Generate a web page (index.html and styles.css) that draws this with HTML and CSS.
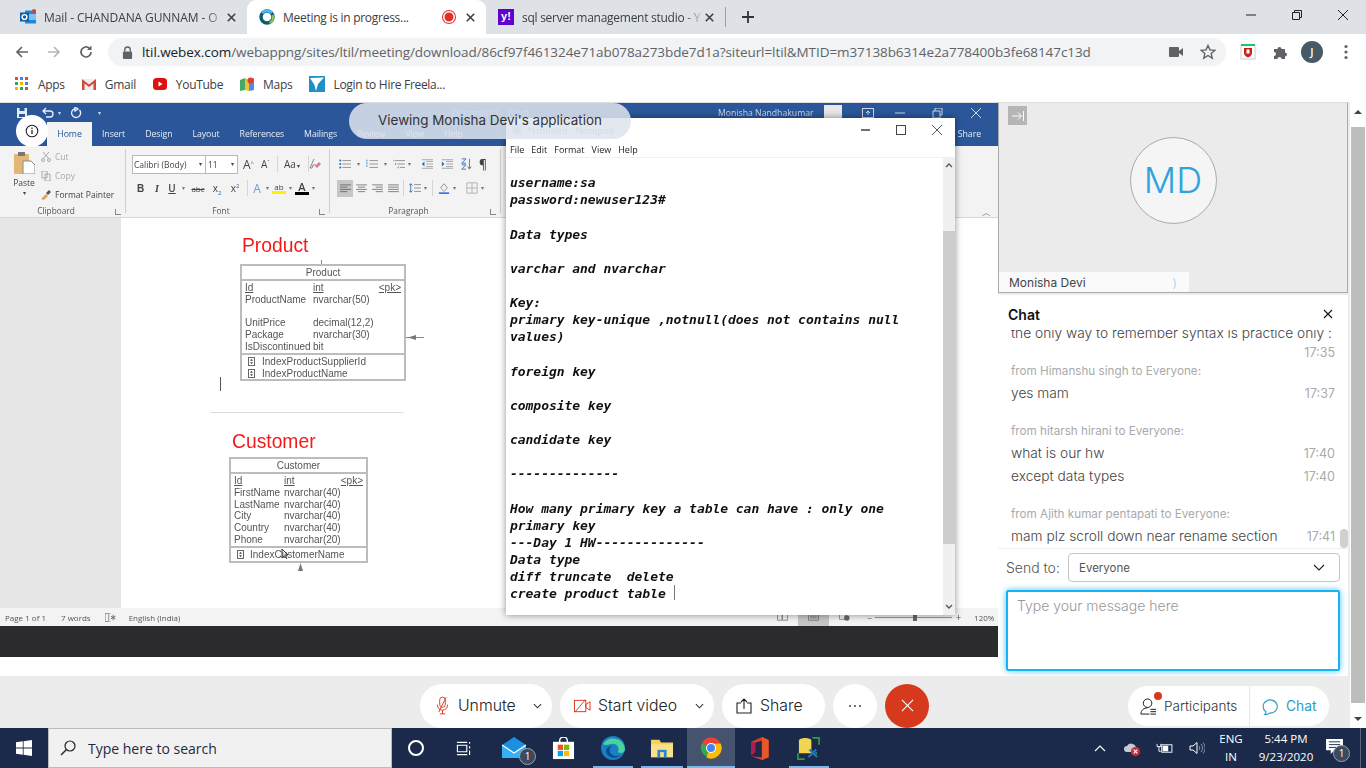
FILE: index.html
```html
<!DOCTYPE html>
<html lang="en">
<head>
<meta charset="utf-8">
<title>Meeting is in progress...</title>
<link rel="stylesheet" href="styles.css">
</head>
<body>
<header class="tabstrip">
  <div class="tab tab-first">
    <svg class="favicon" viewBox="0 0 16 16"><rect x="5" y="1.500" width="11" height="13" fill="#1e88d9"/><rect x="9" y="5" width="7" height="6" fill="#7cc3f2"/><rect x="0" y="3.500" width="9" height="9" fill="#0f5fa8"/><circle cx="4.500" cy="8" r="2.400" fill="none" stroke="#fff" stroke-width="1.400"/><circle cx="14" cy="2" r="2" fill="#d8413a"/></svg>
    <span class="tab-title fade">Mail - CHANDANA GUNNAM - O</span>
    <svg class="tab-x" viewBox="0 0 9 9"><path d="M.8.800l7.400 7.400M8.200.800L.8 8.200" stroke="#3c4043" stroke-width="1.600"/></svg>
  </div>
  <div class="tab tab-active">
    <svg class="favicon" viewBox="0 0 16 16"><circle cx="8" cy="8" r="6" fill="none" stroke="#0b5a6e" stroke-width="3.400"/><path d="M3 4a6.500 6.500 0 0 1 10 0" fill="none" stroke="#49b9e6" stroke-width="3"/><path d="M13.500 6a6 6 0 0 1-3 8" fill="none" stroke="#8ac64a" stroke-width="2.400"/></svg>
    <span class="tab-title">Meeting is in progress...</span>
    <span class="rec"></span>
    <svg class="tab-x" viewBox="0 0 9 9"><path d="M.8.800l7.400 7.400M8.200.800L.8 8.200" stroke="#3c4043" stroke-width="1.600"/></svg>
  </div>
  <div class="tab tab-last">
    <span class="yahoo">y!</span>
    <span class="tab-title fade">sql server management studio - Y</span>
    <svg class="tab-x" viewBox="0 0 9 9"><path d="M.8.800l7.400 7.400M8.200.800L.8 8.200" stroke="#3c4043" stroke-width="1.600"/></svg>
  </div>
  <span class="tab-sep"></span>
  <svg class="plus" viewBox="0 0 14 14"><path d="M7 1v12M1 7h12" stroke="#333" stroke-width="1.800"/></svg>
  <div class="winctl">
    <svg viewBox="0 0 12 12"><path d="M1 6h10" stroke="#222" stroke-width="1"/></svg>
    <svg viewBox="0 0 12 12"><path d="M1.500 3.500h7v7h-7zM3.500 3.500v-2h7v7h-2" fill="none" stroke="#222"/></svg>
    <svg viewBox="0 0 12 12"><path d="M1 1l10 10M11 1L1 11" stroke="#222"/></svg>
  </div>
</header>

<nav class="toolbar">
  <svg class="nav-ic" viewBox="0 0 16 16"><path d="M14 8H3M8 3L3 8l5 5" fill="none" stroke="#5f6368" stroke-width="1.700"/></svg>
  <svg class="nav-ic" viewBox="0 0 16 16"><path d="M2 8h11M8 3l5 5-5 5" fill="none" stroke="#b4b6b9" stroke-width="1.700"/></svg>
  <svg class="nav-ic" viewBox="0 0 16 16"><path d="M13 8a5 5 0 1 1-1.500-3.600" fill="none" stroke="#5f6368" stroke-width="1.700"/><path d="M13.500 1.500v4.500h-4.500z" fill="#5f6368"/></svg>
  <div class="omnibox">
    <svg class="lock" viewBox="0 0 12 14"><path d="M3 6V4a3 3 0 0 1 6 0v2" fill="none" stroke="#5f6368" stroke-width="1.500"/><rect x="1" y="6" width="10" height="8" rx="1" fill="#5f6368"/></svg>
    <span class="url"><b>ltil.webex.com</b>/webappng/sites/ltil/meeting/download/86cf97f461324e71ab078a273bde7d1a?siteurl=ltil&amp;MTID=m37138b6314e2a778400b3fe68147c13d</span>
    <svg class="cam" viewBox="0 0 14 10"><rect width="10" height="10" rx="1" fill="#5f6368"/><path d="M10 4l4-3v8l-4-3z" fill="#5f6368"/></svg>
    <svg class="star" viewBox="0 0 16 16"><path d="M8 1.500l2 4.400 4.800.5-3.600 3.200 1 4.700L8 11.500l-4.200 2.800 1-4.700L1.200 6.400 6 5.900z" fill="none" stroke="#5f6368" stroke-width="1.400"/></svg>
  </div>
  <svg class="ext" viewBox="0 0 16 16"><rect x="1" y="1" width="14" height="14" fill="#fff" stroke="#ccc"/><rect x="1" y="0" width="14" height="2" fill="#21c16b"/><path d="M4 4h8v5c0 2-2 3.500-4 4.500C6 12.500 4 11 4 9z" fill="#c9201c"/><rect x="6.500" y="5.500" width="3" height="4" fill="#fff"/></svg>
  <svg class="ext puzzle" viewBox="0 0 16 16"><path d="M2 5h3.500a2 2 0 1 1 4 0H13v3.500a2 2 0 1 1 0 4V15H9.500a2 2 0 1 0-4 0H2v-3a2 2 0 1 0 0-4z" fill="#5f6368"/></svg>
  <span class="avatar">J</span>
  <svg class="dots" viewBox="0 0 4 16"><circle cx="2" cy="2.500" r="1.600" fill="#5f6368"/><circle cx="2" cy="8" r="1.600" fill="#5f6368"/><circle cx="2" cy="13.500" r="1.600" fill="#5f6368"/></svg>
</nav>

<nav class="bookmarks">
  <a class="bm"><svg viewBox="0 0 14 14"><g><rect x="0" y="0" width="3" height="3" fill="#e2483c"/><rect x="5" y="0" width="3" height="3" fill="#3d84f0"/><rect x="10" y="0" width="3" height="3" fill="#e2483c"/><rect x="0" y="5" width="3" height="3" fill="#31a653"/><rect x="5" y="5" width="3" height="3" fill="#f4b400"/><rect x="10" y="5" width="3" height="3" fill="#3d84f0"/><rect x="0" y="10" width="3" height="3" fill="#f4b400"/><rect x="5" y="10" width="3" height="3" fill="#31a653"/><rect x="10" y="10" width="3" height="3" fill="#e2483c"/></g></svg>Apps</a>
  <a class="bm"><svg viewBox="0 0 14 14"><path d="M0 2h14v11h-14z" fill="#eee"/><path d="M0 2l7 5.500L14 2v11h-2.500V6.500L7 10 2.500 6.500V13H0z" fill="#d2483a"/></svg>Gmail</a>
  <a class="bm"><svg viewBox="0 0 14 14"><rect y="1" width="14" height="12" rx="3.500" fill="#e01010"/><path d="M5.500 4.500l4 2.500-4 2.500z" fill="#fff"/></svg>YouTube</a>
  <a class="bm"><svg viewBox="0 0 14 14"><path d="M0 3l5-2v12l-5 1z" fill="#48a868"/><path d="M5 1l4 2v11l-4-1z" fill="#f1c232"/><path d="M9 3l5-2v12l-5 1z" fill="#4a8ce8"/><circle cx="10.500" cy="3.500" r="3" fill="#d8402f"/></svg>Maps</a>
  <a class="bm bm-wide"><svg viewBox="0 0 16 16"><rect width="16" height="16" fill="#1f8fc9"/><path d="M1 2l14-.5L9 8l-2 7-1.500-6z" fill="#fff"/></svg>Login to Hire Freela...</a>
</nav>

<main class="main">
  <div class="content">
    <div class="top">
      <div class="stage">
        <section class="share">
          <div class="word">
            <div class="wtitle">
              <svg class="qat" viewBox="0 0 12 12"><path d="M1 1h10v10H1z" fill="#e4ebf5"/><rect x="3.500" y="1" width="5" height="3" fill="#2b579a"/><rect x="3" y="7" width="6" height="3" fill="#2b579a"/></svg>
              <svg class="qat" viewBox="0 0 12 12"><path d="M4 1L1 4l3 3M1.500 4H8a3 3 0 0 1 0 6H4" fill="none" stroke="#eef" stroke-width="1.300"/></svg>
              <span class="wcaret">▾</span>
              <svg class="qat" viewBox="0 0 12 12"><path d="M9.500 3A4.500 4.500 0 1 1 5 1.600M5 0v4l3-2z" fill="none" stroke="#eef" stroke-width="1.300"/></svg>
              <span class="wcaret wcaret-gap">▾</span>
              <span class="doc-name">Document1 - Word</span>
              <span class="user-name">Monisha Nandhakumar</span>
              <span class="user-pic"></span>
              <svg class="wbtn" viewBox="0 0 12 10"><rect x=".5" y=".5" width="11" height="9" fill="none" stroke="#cdd7e8"/><path d="M6 7V3M4 5l2-2 2 2" fill="none" stroke="#cdd7e8"/></svg>
              <svg class="wbtn" viewBox="0 0 12 10"><path d="M1 5h10" stroke="#cdd7e8"/></svg>
              <svg class="wbtn" viewBox="0 0 12 10"><path d="M1 3h7v7H1zM3 3V0h7v7H8" fill="none" stroke="#cdd7e8"/></svg>
              <svg class="wbtn" viewBox="0 0 12 10"><path d="M1 0l10 10M11 0L1 10" stroke="#cdd7e8"/></svg>
            </div>
            <div class="wtabs">
              <span class="wtab on">Home</span><span class="wtab">Insert</span><span class="wtab">Design</span><span class="wtab">Layout</span><span class="wtab">References</span><span class="wtab">Mailings</span><span class="wtab">Review</span><span class="wtab">View</span><span class="wtab">Help</span>
              <span class="wshare">Share</span>
            </div>
            <div class="ribbon">
              <div class="rgroup g-clip">
                <div class="clip-body">
                  <div class="paste">
                    <svg viewBox="0 0 22 22"><rect x="1" y="2" width="15" height="20" rx="1" fill="#e3b777"/><rect x="5" y="0" width="7" height="4" fill="#777"/><path d="M10 9h8l4 4v9H10z" fill="#fff" stroke="#888"/></svg>
                    <span>Paste</span><i>▾</i>
                  </div>
                  <div class="clip-list">
                    <span class="dim"><svg viewBox="0 0 10 10"><path d="M2 0l6 7M8 0L2 7" stroke="#aaa"/><circle cx="2" cy="8" r="1.500" fill="none" stroke="#aaa"/><circle cx="8" cy="8" r="1.500" fill="none" stroke="#aaa"/></svg>Cut</span>
                    <span class="dim"><svg viewBox="0 0 10 10"><path d="M1 0h5v7H1zM4 3h5v7H4z" fill="#f3f3f3" stroke="#aaa"/></svg>Copy</span>
                    <span><svg viewBox="0 0 10 10"><path d="M0 9l5-5 2 2-4 4z" fill="#d9a557"/><path d="M5 3l3-3 2 2-3 3z" fill="#555"/></svg>Format Painter</span>
                  </div>
                </div>
                <div class="rlabel">Clipboard<em></em></div>
              </div>
              <div class="rgroup g-font">
                <div class="rrow r1">
                  <span class="combo c-font">Calibri (Body)<i>▾</i></span><span class="combo c-size">11<i>▾</i></span>
                  <span class="gl big">A<sup>^</sup></span><span class="gl mid">A<sup>ˇ</sup></span><span class="vsep"></span><span class="gl aa">Aa<i>▾</i></span><span class="vsep"></span>
                  <svg class="ri ri-clear" viewBox="0 0 12 12"><path d="M5 1L1 10h2l1-3h3" fill="none" stroke="#888"/><path d="M6 8l4-4 2 2-4 4z" fill="#e07a8b"/></svg>
                </div>
                <div class="rrow r2">
                  <span class="gl b">B</span><span class="gl it">I</span><span class="gl un">U</span><i class="car">▾</i><span class="gl abc">abc</span><span class="gl xs">x<sub>2</sub></span><span class="gl xs">x<sup>2</sup></span><span class="vsep"></span>
                  <span class="gl glow">A</span><i class="car">▾</i><span class="gl hl">ab</span><i class="car">▾</i><span class="gl fc">A</span><i class="car">▾</i>
                </div>
                <div class="rlabel">Font<em></em></div>
              </div>
              <div class="rgroup g-para">
                <div class="rrow p1">
                  <svg class="ri" viewBox="0 0 14 12"><path d="M4 2h10M4 6h10M4 10h10" stroke="#888"/><circle cx="1.500" cy="2" r="1.200" fill="#2b6cb0"/><circle cx="1.500" cy="6" r="1.200" fill="#2b6cb0"/><circle cx="1.500" cy="10" r="1.200" fill="#2b6cb0"/></svg><i class="car">▾</i>
                  <svg class="ri" viewBox="0 0 14 12"><path d="M4 2h10M4 6h10M4 10h10" stroke="#888"/><path d="M1 1v9" stroke="#2b6cb0" stroke-dasharray="2 1"/></svg><i class="car">▾</i>
                  <svg class="ri" viewBox="0 0 14 12"><path d="M2 2h12M5 6h9M8 10h6" stroke="#888"/><path d="M0 1v2M3 5v2M6 9v2" stroke="#2b6cb0"/></svg><i class="car car-s">▾</i>
                  <span class="vsep"></span>
                  <svg class="ri" viewBox="0 0 14 12"><path d="M6 3h8M6 6h8M6 9h8M1 1h13M1 11h13" stroke="#888" stroke-width=".8"/><path d="M4 3L1 6l3 3z" fill="#2b6cb0"/></svg>
                  <svg class="ri" viewBox="0 0 14 12"><path d="M6 3h8M6 6h8M6 9h8M1 1h13M1 11h13" stroke="#888" stroke-width=".8"/><path d="M1 3l3 3-3 3z" fill="#2b6cb0"/></svg>
                  <span class="vsep"></span>
                  <svg class="ri" viewBox="0 0 14 14"><path d="M2 1h5L2 6h5M2 8h5L2 13h5" fill="none" stroke="#2b6cb0"/><path d="M11 1v11M9 10l2 3 2-3" fill="none" stroke="#666"/></svg>
                  <span class="vsep"></span>
                  <span class="gl pilcrow">¶</span>
                </div>
                <div class="rrow p2">
                  <span class="al on"><svg viewBox="0 0 12 10"><path d="M0 1h12M0 3.500h8M0 6h12M0 8.500h8" stroke="#666"/></svg></span>
                  <span class="al"><svg viewBox="0 0 12 10"><path d="M0 1h12M2 3.500h8M0 6h12M2 8.500h8" stroke="#777"/></svg></span>
                  <span class="al"><svg viewBox="0 0 12 10"><path d="M0 1h12M4 3.500h8M0 6h12M4 8.500h8" stroke="#777"/></svg></span>
                  <span class="al"><svg viewBox="0 0 12 10"><path d="M0 1h12M0 3.500h12M0 6h12M0 8.500h12" stroke="#777"/></svg></span>
                  <span class="vsep"></span>
                  <svg class="ri" viewBox="0 0 14 12"><path d="M2 1v10M0 3l2-2 2 2M0 9l2 2 2-2" fill="none" stroke="#2b6cb0"/><path d="M6 2h8M6 6h8M6 10h8" stroke="#888"/></svg><i class="car">▾</i>
                  <span class="vsep"></span>
                  <svg class="ri" viewBox="0 0 14 14"><path d="M3 7l4-5 4 5-4 4z" fill="none" stroke="#888"/><rect x="1" y="12" width="12" height="2" fill="#3b78e7"/></svg><i class="car">▾</i>
                  <svg class="ri ri-borders" viewBox="0 0 14 14"><path d="M1 1h12v12H1zM7 1v12M1 7h12" fill="none" stroke="#aaa"/></svg><i class="car">▾</i>
                </div>
                <div class="rlabel">Paragraph<em></em></div>
              </div>
              <span class="ribbon-up">︿</span>
            </div>
            <div class="docarea">
              <div class="page">
                <h2 class="tname t-product">Product</h2>
                <div class="erd erd-product">
                  <span class="link-t"></span>
                  <div class="erd-head">Product</div>
                  <div class="erd-body">
                    <span class="u">Id</span><span class="u">int</span><span class="u">&lt;pk&gt;</span>
                    <span>ProductName</span><span>nvarchar(50)</span><span></span>
                    <span>&nbsp;</span><span></span><span></span>
                    <span>UnitPrice</span><span>decimal(12,2)</span><span></span>
                    <span>Package</span><span>nvarchar(30)</span><span></span>
                    <span>IsDiscontinued</span><span>bit</span><span></span>
                  </div>
                  <div class="erd-idx">
                    <span><i class="key"></i>IndexProductSupplierId</span>
                    <span><i class="key"></i>IndexProductName</span>
                  </div>
                  <svg class="link-r" viewBox="0 0 18 5"><path d="M0 2.500h18" stroke="#888"/><path d="M2 2.500L10 0v5z" fill="#777"/></svg>
                </div>
                <span class="text-caret"></span>
                <hr class="pg-rule">
                <h2 class="tname t-customer">Customer</h2>
                <div class="erd erd-customer">
                  <div class="erd-head">Customer</div>
                  <div class="erd-body">
                    <span class="u">Id</span><span class="u">int</span><span class="u">&lt;pk&gt;</span>
                    <span>FirstName</span><span>nvarchar(40)</span><span></span>
                    <span>LastName</span><span>nvarchar(40)</span><span></span>
                    <span>City</span><span>nvarchar(40)</span><span></span>
                    <span>Country</span><span>nvarchar(40)</span><span></span>
                    <span>Phone</span><span>nvarchar(20)</span><span></span>
                  </div>
                  <div class="erd-idx"><span><i class="key"></i>IndexCustomerName</span></div>
                  <svg class="link-b" viewBox="0 0 7 9"><path d="M3.500 0L6 8H1z" fill="#777"/></svg>
                  <svg class="mouse" viewBox="0 0 8 12"><path d="M1 1v9l2.500-2.200L6 11" fill="none" stroke="#333"/><path d="M1 1l6 6H3.500" fill="none" stroke="#333"/></svg>
                </div>
              </div>
            </div>
            <div class="wstatus">
              <span>Page 1 of 1</span><span>7 words</span>
              <svg viewBox="0 0 12 10"><path d="M0 .5h4v9H0zM6 .5h-1M6 9.500h-1" fill="none" stroke="#888"/><path d="M9 2v6M6.500 3.500l5 3M11.500 3.500l-5 3" stroke="#666"/></svg>
              <span>English (India)</span>
              <div class="wview">
                <svg viewBox="0 0 12 8"><path d="M.5.500h5v7h-5zM6 .500h5.500v7H6z" fill="none" stroke="#888"/></svg>
                <span class="wprint"><svg viewBox="0 0 12 8"><path d="M.5.500h11v7h-11zM2 3h8M2 5h8" fill="none" stroke="#777"/></svg></span>
                <svg viewBox="0 0 12 8"><path d="M.5.500h7v6h-7z" fill="none" stroke="#888"/><circle cx="8.500" cy="5" r="3" fill="#666"/></svg>
                <span class="zoom-m">−</span>
                <span class="slider"><i></i></span>
                <span class="zoom-p">+</span>
                <span class="zoom-v">120%</span>
              </div>
            </div>
          </div>

          <article class="notepad">
            <div class="np-title">
              <svg class="np-ico" viewBox="0 0 12 12"><rect x="1" y="1" width="10" height="10" fill="#cfe3ee"/><path d="M3 4h6M3 6h6M3 8h6" stroke="#9db7c6"/></svg>
              <span class="np-name">*Untitled - Notepad</span>
              <svg viewBox="0 0 12 12"><path d="M2 6h9" stroke="#111" stroke-width="1.200"/></svg>
              <svg viewBox="0 0 12 12"><rect x="1.500" y="1.500" width="9" height="9" fill="none" stroke="#444"/></svg>
              <svg viewBox="0 0 12 12"><path d="M1 1l10 10M11 1L1 11" stroke="#555"/></svg>
            </div>
            <div class="np-menu"><span>File</span><span>Edit</span><span>Format</span><span>View</span><span>Help</span></div>
            <div class="np-body">
<pre class="np-text">
username:sa
password:newuser123#

Data types

varchar and nvarchar

Key:
primary key-unique ,notnull(does not contains null
values)

foreign key

composite key

candidate key

--------------

How many primary key a table can have : only one
primary key
---Day 1 HW--------------
Data type
diff truncate  delete
create product table <span class="np-caret"></span></pre>
              <div class="np-scroll">
                <svg class="np-up" viewBox="0 0 8 5"><path d="M1 4l3-3 3 3" fill="none" stroke="#555" stroke-width="1.300"/></svg>
                <i></i>
                <svg class="np-down" viewBox="0 0 8 5"><path d="M1 1l3 3 3-3" fill="none" stroke="#555" stroke-width="1.300"/></svg>
              </div>
            </div>
          </article>

          <div class="pill">Viewing Monisha Devi's application</div>
          <div class="info"><svg viewBox="0 0 14 14"><circle cx="7" cy="7" r="5.800" fill="none" stroke="#222" stroke-width="1.100"/><path d="M7 6v4" stroke="#222" stroke-width="1.300"/><circle cx="7" cy="4.200" r=".8" fill="#222"/></svg></div>
        </section>
        <div class="dark-band"></div>
        <div class="white-band"></div>
      </div>

      <aside class="side">
        <div class="video">
          <span class="collapse"><svg viewBox="0 0 12 10"><path d="M0 5h9M6 1.500L9.500 5 6 8.500M11.500 0v10" fill="none" stroke="#fff"/></svg></span>
          <div class="md">MD</div>
          <div class="vname"><span>Monisha Devi</span><i>)</i></div>
        </div>
        <div class="chat">
          <div class="chat-head"><strong>Chat</strong><svg viewBox="0 0 10 10"><path d="M1 1l8 8M9 1L1 9" stroke="#111" stroke-width="1.100"/></svg></div>
          <div class="msgs">
            <div class="msg-group first">
              <div class="row wrap"><span>the only way to remember syntax is practice only :</span></div>
              <div class="row timeonly"><time>17:35</time></div>
            </div>
            <div class="msg-group">
              <div class="meta">from Himanshu singh to Everyone:</div>
              <div class="row"><span>yes mam</span><time>17:37</time></div>
            </div>
            <div class="msg-group">
              <div class="meta">from hitarsh hirani to Everyone:</div>
              <div class="row"><span>what is our hw</span><time>17:40</time></div>
              <div class="row"><span>except data types</span><time>17:40</time></div>
            </div>
            <div class="msg-group">
              <div class="meta">from Ajith kumar pentapati to Everyone:</div>
              <div class="row"><span>mam plz scroll down near rename section</span><time>17:41</time></div>
            </div>
            <i class="msgs-thumb"></i>
          </div>
          <div class="sendrow">
            <label>Send to:</label>
            <div class="select"><span>Everyone</span><svg viewBox="0 0 12 7"><path d="M1 1l5 5 5-5" fill="none" stroke="#222" stroke-width="1.100"/></svg></div>
          </div>
          <div class="compose">Type your message here</div>
        </div>
      </aside>
    </div>

    <div class="controls">
      <div class="pillbtn p-unmute">
        <svg viewBox="0 0 14 20"><rect x="4" y="1" width="6" height="11" rx="3" fill="none" stroke="#d6391c"/><path d="M1.500 9c0 4 2.500 6 5.500 6s5.500-2 5.500-6M7 15v4M4 19h6M11 1L3 17" fill="none" stroke="#d6391c"/></svg>
        <span>Unmute</span>
        <svg class="chev" viewBox="0 0 10 6"><path d="M1 1l4 4 4-4" fill="none" stroke="#333" stroke-width="1.200"/></svg>
      </div>
      <div class="pillbtn p-video">
        <svg viewBox="0 0 18 14"><rect x=".5" y="1" width="12" height="12" fill="none" stroke="#d6391c"/><path d="M12.500 5.500l4.500-3v9l-4.500-3zM12 .500L1 13.500" fill="none" stroke="#d6391c"/></svg>
        <span>Start video</span>
        <svg class="chev" viewBox="0 0 10 6"><path d="M1 1l4 4 4-4" fill="none" stroke="#333" stroke-width="1.200"/></svg>
      </div>
      <div class="pillbtn p-share">
        <svg viewBox="0 0 16 16"><path d="M5 5H1v10h14V5h-4M8 11V1M5 4l3-3 3 3" fill="none" stroke="#222" stroke-width="1.100"/></svg>
        <span>Share</span>
      </div>
      <div class="pillbtn p-more"><svg viewBox="0 0 14 2"><circle cx="2" cy="1" r=".9" fill="#333"/><circle cx="7" cy="1" r=".9" fill="#333"/><circle cx="12" cy="1" r=".9" fill="#333"/></svg></div>
      <div class="pillbtn p-end"><svg viewBox="0 0 14 14"><path d="M1 1l12 12M13 1L1 13" stroke="#fff" stroke-width="1.200"/></svg></div>
      <div class="dock">
        <div class="dock-part">
          <svg viewBox="0 0 18 18"><circle cx="8" cy="5.500" r="4.500" fill="none" stroke="#111"/><path d="M1 17c0-4 3-6.500 7-6.500M11 12h6M11 14.500h6M11 17h6M1 17h9" fill="none" stroke="#111"/></svg>
          <i class="dot"></i>
          <span>Participants</span>
        </div>
        <div class="dock-chat">
          <svg viewBox="0 0 18 18"><path d="M4 14.500A7.500 7 0 1 1 8 16c-1 .8-3 1.500-5 1.500 1-.8 1.300-2 1-3z" fill="none" stroke="#2e9bc5" stroke-width="1.200"/></svg>
          <span>Chat</span>
        </div>
      </div>
    </div>
  </div>
  <div class="pagebar">
    <span class="pb-up"></span>
    <i></i>
    <span class="pb-down"></span>
  </div>
</main>

<footer class="taskbar">
  <div class="start"><svg viewBox="0 0 16 16"><path d="M0 2.300l6.800-1v6.300H0zM7.600 1.200L16 0v7.600H7.600zM0 8.400h6.800v6.300l-6.800-1zM7.600 8.400H16V16l-8.400-1.200z" fill="#fff"/></svg></div>
  <div class="search">
    <svg viewBox="0 0 16 16"><circle cx="10" cy="6" r="5" fill="none" stroke="#222" stroke-width="1.200"/><path d="M6.500 9.500L1 15" stroke="#222" stroke-width="1.400"/></svg>
    <span>Type here to search</span>
  </div>
  <div class="slot s-cortana"><i class="cortana"></i></div>
  <div class="slot s-view"><svg class="tv" viewBox="0 0 16 16"><path d="M1.500 4.500h10v7h-10zM1 1.500h11M1 14.500h11M14.500 1v2M14.500 5.500v2.500M14.500 10v5" fill="none" stroke="#fff" stroke-width="1.200"/></svg></div>
  <div class="slot app s-mail">
    <svg viewBox="0 0 24 22"><path d="M0 8L12 0l12 8v13H0z" fill="#1b8fe0"/><path d="M0 8l12 8 12-8v13H0z" fill="#35b0f2"/><path d="M0 8l12 8 12-8" fill="none" stroke="#fff" stroke-width="1.200"/></svg>
    <b class="tbadge">1</b>
  </div>
  <div class="slot app s-store"><svg viewBox="0 0 24 24"><path d="M8 6V4a4 4 0 0 1 8 0v2" fill="none" stroke="#fff" stroke-width="1.500"/><path d="M1 5h22v18H1z" fill="#fff"/><rect x="6" y="8" width="5.500" height="5.500" fill="#f25022"/><rect x="12.500" y="8" width="5.500" height="5.500" fill="#7fba00"/><rect x="6" y="14.500" width="5.500" height="5.500" fill="#00a4ef"/><rect x="12.500" y="14.500" width="5.500" height="5.500" fill="#ffb900"/></svg></div>
  <div class="slot app on s-edge"><svg viewBox="0 0 24 24"><circle cx="12" cy="12" r="12" fill="#1a7fc6"/><path d="M2 8A12 12 0 0 1 24 13c0 4-5 5-7 3 2-5-2-9-6-8-4 .500-7 2-9 0z" fill="#48d49a"/><path d="M11 10c-4 2-3 9 3 10 2 .3 4 0 6-1-5 5-14 3-15-4 0-3 3-5 6-5z" fill="#0b4d8c"/></svg></div>
  <div class="slot app on s-folder"><svg viewBox="0 0 24 20"><path d="M0 1h9l2 3h13v16H0z" fill="#f7cf5a"/><path d="M0 6h24v14H0z" fill="#fbe08a"/><rect x="7" y="12" width="10" height="2.500" fill="#1f88d6"/><rect x="7" y="14.500" width="3" height="5.500" fill="#1f88d6"/><rect x="14" y="14.500" width="3" height="5.500" fill="#1f88d6"/></svg></div>
  <div class="slot app on active s-chrome"><svg viewBox="0 0 24 24"><path d="M12 12L2 6.500A11.500 11.500 0 0 1 22.500 7H12z" fill="#ea4335"/><path d="M12 12l-5 9.600A11.500 11.500 0 0 1 2 6.500z" fill="#34a853"/><path d="M12 7h10.500A11.500 11.500 0 0 1 7 22.300z" fill="#fbbc05"/><circle cx="12" cy="12" r="5.500" fill="#fff"/><circle cx="12" cy="12" r="4.300" fill="#4285f4"/></svg></div>
  <div class="slot app s-office"><svg viewBox="0 0 20 24"><path d="M1 5L12 0l7 3v18l-7 3-11-4 11 1V4L5 6v10l-4 3z" fill="#d83b2b"/><path d="M12 0l7 3v18l-7 3z" fill="#e8562a"/><path d="M1 19V5l4 1v10z" fill="#a8204f"/></svg></div>
  <div class="slot app on s-sql"><svg viewBox="0 0 24 24"><path d="M2 4c0-4 13-4 13 0v13H2z" fill="#f1d74f"/><path d="M16 1h7v7M1 17v6h7M20 16v2" fill="none" stroke="#2c9c3f" stroke-width="1.800"/><path d="M12 21l8-8M13 13l8 8" stroke="#1e78c8" stroke-width="2.200"/></svg></div>
  <div class="tray">
    <svg class="tr-chev" viewBox="0 0 12 7"><path d="M1 6l5-5 5 5" fill="none" stroke="#fff" stroke-width="1.100"/></svg>
    <span class="tr-cloud"><svg viewBox="0 0 16 14"><path d="M3 10a3 3 0 0 1 0-6 5 5 0 0 1 9 1 3 3 0 0 1 1 5z" fill="#c5cad4"/><circle cx="11.500" cy="9.500" r="4.500" fill="#d8293a"/><path d="M9.700 7.700l3.600 3.600M13.300 7.700l-3.600 3.600" stroke="#fff" stroke-width="1.100"/></svg></span>
    <svg class="tr-power" viewBox="0 0 18 14"><path d="M1 2v3h4V2M3 5v5h2" fill="none" stroke="#fff"/><rect x="6" y="3" width="11" height="8" fill="none" stroke="#fff"/><rect x="7" y="4" width="6" height="6" fill="#fff"/></svg>
    <svg class="tr-vol" viewBox="0 0 16 14"><path d="M1 5h3l4-3.500v11L4 9H1z" fill="none" stroke="#fff"/><path d="M10 5a3 3 0 0 1 0 4M12 3a6 6 0 0 1 0 8M14 1.500a8 8 0 0 1 0 11" fill="none" stroke="#8b94a8"/></svg>
    <div class="lang"><span>ENG</span><span>IN</span></div>
    <div class="clock"><span>5:44 PM</span><span>9/23/2020</span></div>
    <div class="notif"><svg viewBox="0 0 18 16"><path d="M0 0h18v12h-9l-4 4v-4H0z" fill="#fff"/><path d="M3 3h12M3 6h12M3 9h8" stroke="#1b2a4a"/></svg><b class="tbadge">1</b></div>
  </div>
</footer>
</body>
</html>
```

FILE: styles.css
```css
* { box-sizing: border-box; }
html, body { margin: 0; padding: 0; }
body { width: 1366px; height: 768px; overflow: hidden; display: flex; flex-direction: column; background: #fff; font-family: "Open Sans", "Noto Sans", sans-serif; color: #333; }
svg { display: block; flex: none; }
i { font-style: normal; }

/* Chrome: tabs */
.tabstrip { height: 34px; background: #dee1e6; display: flex; align-items: center; padding-left: 8px; flex: none; }
.tab { height: 34px; width: 239px; padding-left: 12px; display: flex; align-items: center; font-size: 12px; color: #3c4043; flex: none; }
.tab-active { background: #fff; border-radius: 9px 9px 0 0; }
.favicon { width: 16px; height: 16px; margin-right: 8px; }
.tab-title { flex: 1; min-width: 0; overflow: hidden; white-space: nowrap; letter-spacing: -.1px; padding-right: 5px; }
.tab-active .tab-title { letter-spacing: -.27px; }
.tab-last .tab-title { letter-spacing: -.27px; }
.fade { -webkit-mask-image: linear-gradient(90deg, #000 88%, transparent); mask-image: linear-gradient(90deg, #000 88%, transparent); }
.tab-x { width: 9px; height: 9px; margin-right: 11px; }
.rec { width: 12px; height: 12px; margin-right: 11px; border-radius: 50%; background: #e0302a; box-shadow: 0 0 0 1px #e0302a, inset 0 0 0 1.500px #fff; flex: none; }
.yahoo { width: 16px; height: 16px; margin-right: 8px; background: #5f01d1; color: #fff; font: 700 11px/15px "Liberation Sans", sans-serif; text-align: center; }
.tab-sep { width: 1px; height: 20px; background: #9aa0a6; }
.plus { width: 14px; height: 14px; margin-left: 15px; }
.winctl { margin-left: auto; display: flex; align-items: center; padding-right: 17px; gap: 34px; padding-bottom: 4px; }
.winctl svg { width: 12px; height: 12px; }

/* Chrome: toolbar */
.toolbar { height: 32px; flex: none; background: #fff; display: flex; align-items: center; padding: 4px 0 0 14px; }
.nav-ic { width: 16px; height: 16px; margin-right: 16px; }
.omnibox { width: 1118px; height: 28px; margin-left: -2px; background: #f1f3f4; border-radius: 14px; display: flex; align-items: center; padding-left: 14px; }
.lock { width: 11px; height: 13px; margin-right: 9px; }
.url { width: 1019px; font-size: 13.500px; color: #5f6368; white-space: nowrap; letter-spacing: -.075px; overflow: hidden; }
.url b { font-weight: 400; color: #202124; }
.cam { width: 14px; height: 10px; margin-left: 8px; }
.star { width: 16px; height: 16px; margin-left: 17px; }
.ext { width: 16px; height: 16px; margin-left: 14px; }
.puzzle { margin-left: 16px; }
.avatar { width: 22px; height: 22px; margin-left: 13px; border-radius: 50%; background: #455a64; color: #fff; font-size: 11px; font-weight: 600; line-height: 22px; text-align: center; }
.dots { width: 4px; height: 16px; margin-left: 21px; }

/* Chrome: bookmarks */
.bookmarks { height: 36px; flex: none; background: #fff; display: flex; align-items: center; padding-left: 15px; font-size: 12px; color: #3c4043; }
.bm { display: flex; align-items: center; gap: 9px; margin-right: 17px; letter-spacing: -.3px; }
.bm svg { width: 14px; height: 14px; }
.bm-wide { gap: 8px; }
.bm-wide svg { width: 16px; height: 16px; }

/* Page */
.main { height: 626px; flex: none; display: flex; }
.content { width: 1350px; display: flex; flex-direction: column; background: #ececec; }
.top { height: 574px; display: flex; flex: none; }
.stage { width: 998px; display: flex; flex-direction: column; flex: none; }
.share { height: 524px; position: relative; flex: none; overflow: hidden; }
.dark-band { height: 31px; background: #2b2a2d; flex: none; }
.white-band { height: 19px; background: #fff; flex: none; }

/* Word */
.word { height: 100%; display: flex; flex-direction: column; filter: blur(.35px); border-top: 1px solid #ddd; background: #e6e6e6; }
.wtitle { height: 19px; flex: none; background: #2b579a; display: flex; align-items: center; padding-left: 16px; color: #cdd7e8; font-size: 8.700px; }
.qat { width: 12px; height: 12px; margin-right: 4px; }
.qat + .qat { margin-left: 10px; }
.wcaret { font-size: 6px; margin: 0 9px 0 0; flex: none; }
.wcaret-gap { margin: 0 0 0 12px; }
.doc-name { margin-left: 351px; color: #7f9cc9; width: 266px; white-space: nowrap; flex: none; }
.user-name { color: #cdd7e8; width: 106px; white-space: nowrap; flex: none; }
.user-pic { width: 18px; height: 15px; background: #e8e8e8; margin-right: 20px; flex: none; }
.wbtn { width: 12px; height: 10px; margin-right: 26px; }
.wbtn:nth-of-type(4) { margin-right: 20px; }
.wbtn:last-child { margin-right: 0; }
.wtabs { height: 24px; flex: none; background: #2b579a; display: flex; align-items: center; padding-left: 47px; font-size: 8.800px; letter-spacing: -.1px; color: #e6ecf5; }
.wtab { padding: 0 10px; height: 24px; line-height: 24px; }
.wtab.on { width: 45px; padding: 0; text-align: center; background: #f3f3f3; color: #2b579a; margin-right: 10px; }
.wtab:nth-child(2) { padding-left: 0; }
.wshare { margin-left: auto; margin-right: 17px; }
.ribbon { height: 72px; flex: none; background: #f3f3f3; display: flex; border-bottom: 1px solid #d6d6d6; position: relative; font-size: 9px; color: #444; }
.rgroup { height: 64px; margin-top: 3px; border-right: 1px solid #cfcfcf; position: relative; flex: none; padding-top: 5px; }
.rlabel { position: absolute; left: 0; right: 13px; bottom: -4px; text-align: center; font-size: 8.300px; line-height: 12px; color: #555; }
.rlabel em { position: absolute; right: -9px; bottom: 2px; width: 6px; height: 6px; border-left: 1px solid #888; border-bottom: 1px solid #888; }
.g-clip { width: 126px; padding-top: 2px; }
.clip-body { display: flex; padding-left: 12px; gap: 5px; }
.paste { width: 24px; display: flex; flex-direction: column; align-items: center; }
.paste svg { width: 22px; height: 22px; margin-top: 1px; }
.paste span { margin-top: 3px; font-size: 8.500px; }
.paste i { font-size: 6px; margin-top: 1px; }
.clip-list { display: flex; flex-direction: column; gap: 7px; font-size: 8.500px; white-space: nowrap; }
.clip-list span { display: flex; align-items: center; gap: 4px; line-height: 12px; }
.clip-list svg { width: 10px; height: 10px; }
.dim { color: #aaa; }
.g-font { width: 204px; padding-left: 6px; }
.rrow { display: flex; align-items: center; }
.r1 { height: 20px; }
.r2 { height: 20px; margin-top: 4px; }
.combo { height: 19px; border: 1px solid #b9b9b9; background: #fff; display: flex; align-items: center; justify-content: space-between; padding: 0 3px 0 1px; font-size: 8.500px; color: #444; }
.combo i { font-size: 6px; }
.c-font { width: 74px; }
.c-size { width: 33px; margin-left: -1px; padding-left: 2px; }
.gl { color: #444; display: inline-block; white-space: nowrap; }
.gl sup { font-size: 6px; vertical-align: 4px; line-height: 0; color: #2b6cb0; }
.big { font-size: 12px; margin-left: 5px; width: 18px; }
.mid { font-size: 10px; width: 13px; }
.vsep { width: 1px; height: 16px; background: #d5d5d5; margin: 0 3px; flex: none; }
.aa { font-size: 10px; width: 24px; padding-left: 3px; }
.aa i { font-size: 6px; margin-left: 1px; }
.ri { width: 12px; height: 12px; margin-left: 7px; }
.ri-clear { margin-left: -3px; }
.b { font-weight: 700; font-size: 10px; width: 17px; text-align: center; font-family: "Liberation Sans", sans-serif; }
.it { font-style: italic; font-size: 10px; width: 16px; text-align: center; font-family: "Liberation Serif", serif; font-weight: 700; }
.un { text-decoration: underline; font-size: 10px; width: 14px; text-align: center; font-weight: 600; }
.car { font-size: 6px; width: 9px; text-align: center; color: #777; flex: none; }
.abc { font-size: 8px; width: 20px; text-align: center; text-decoration: line-through; }
.xs { font-size: 10px; width: 18px; text-align: center; }
.xs sub, .xs sup { font-size: 6px; color: #2b6cb0; line-height: 0; }
.glow { color: #6a9bd8; font-size: 12px; width: 12px; text-align: center; }
.hl { font-size: 8px; width: 14px; text-align: center; border-bottom: 3px solid #ffef00; line-height: 9px; }
.fc { font-size: 11px; width: 14px; text-align: center; border-bottom: 3px solid #000; line-height: 10px; font-weight: 600; }
.g-para { width: 171px; padding-left: 9px; }
.p1 { height: 20px; }
.p1 .ri { margin-left: 0; }
.p1 .car { width: 15px; }
.p1 .car.car-s { width: 9px; }
.p1 .ri + .ri { margin-left: 8px; }
.p1 .vsep { margin: 0 3px; background: transparent; }
.p2 { height: 20px; margin-top: 4px; margin-left: -2px; }
.p2 .ri { margin-left: 2px; }
.p2 .ri-borders { margin-left: 7px; }
.p2 .vsep { margin: 0 3px 0 2px; }
.al { width: 16px; height: 17px; display: flex; align-items: center; justify-content: center; flex: none; }
.al.on { background: #c6c6c6; }
.al svg { width: 11px; height: 9px; }
.pilcrow { font-size: 12px; font-weight: 600; }
.ribbon-up { position: absolute; left: 982px; top: 60px; font-size: 9px; color: #666; }
.docarea { height: 390px; flex: none; padding-left: 121px; background: #e6e6e6; overflow: hidden; }
.page { height: 390px; width: 100%; background: #fff; padding-top: 17px; position: relative; }
.tname { margin: 0; font: 400 19.300px/22px "Liberation Sans", sans-serif; color: #f31a1a; }
.t-product { margin-left: 121px; margin-bottom: 7px; }
.t-customer { margin-left: 111px; margin-top: 18px; margin-bottom: 4px; }
.erd { border: 2px solid #bcbcbc; position: relative; font: 10px/11.700px "Liberation Sans", sans-serif; color: #555; background: #fff; }
.erd-product { width: 166px; height: 117px; margin-left: 119px; }
.erd-customer { width: 139px; height: 106px; margin-left: 108px; }
.erd-head { height: 15px; line-height: 14px; text-align: center; border-bottom: 2px solid #bcbcbc; }
.erd-body { display: grid; padding: 1px 3px 0 3px; border-bottom: 2px solid #bcbcbc; height: 74px; }
.erd-product .erd-body { grid-template-columns: 68px 1fr auto; }
.erd-customer .erd-body { grid-template-columns: 50px 1fr auto; }
.u { text-decoration: underline; }
.erd-idx { display: flex; flex-direction: column; padding: 1px 0 0 6px; }
.erd-idx span { display: flex; align-items: center; }
.key { width: 7px; height: 9px; border: 1px solid #666; margin-right: 7px; flex: none; background: radial-gradient(circle at 50% 30%, #666 1px, transparent 1.200px), radial-gradient(circle at 50% 70%, #666 1px, transparent 1.200px); }
.erd-customer .erd-idx { padding-left: 6px; }
.erd-customer .key { margin-right: 6px; }
.link-t { position: absolute; left: 79px; top: -6px; width: 1px; height: 4px; background: #888; }
.link-r { position: absolute; left: 164px; top: 69px; width: 18px; height: 5px; }
.link-b { position: absolute; left: 66px; top: 104px; width: 7px; height: 9px; }
.mouse { position: absolute; left: 50px; top: 89px; width: 8px; height: 12px; }
.text-caret { position: absolute; left: 99px; top: 159px; width: 1px; height: 14px; background: #555; }
.pg-rule { height: 1px; border: 0; background: #ddd; margin: 31px 0 0 89px; width: 194px; }
.wstatus { height: 18px; flex: 1; background: #f3f3f3; display: flex; align-items: center; padding-left: 5px; font-size: 8px; color: #555; }
.wstatus > span { margin-right: 15px; white-space: nowrap; }
.wstatus > svg { width: 11px; height: 9px; margin-right: 13px; margin-left: -1px; }
.wview { margin-left: 582px; display: flex; align-items: center; height: 100%; }
.wview > svg { width: 11px; height: 8px; }
.wprint { width: 31px; height: 100%; background: #c6c6c6; display: flex; align-items: center; justify-content: center; margin: 0 10px; }
.wprint svg { width: 11px; height: 8px; }
.zoom-m { margin-left: 17px; width: 8px; }
.slider { width: 77px; height: 1px; background: #999; position: relative; }
.slider i { position: absolute; left: 38px; top: -3px; width: 4px; height: 7px; background: #666; }
.zoom-p { margin: 0 13px 0 3px; font-size: 10px; }
.zoom-v { color: #555; }

/* Notepad window over the shared screen */
.notepad { position: absolute; left: 506px; top: 16px; width: 449px; height: 497px; background: #fff; display: flex; flex-direction: column; box-shadow: 0 0 7px rgba(0,0,0,.45); filter: blur(.25px); }
.np-title { height: 24px; flex: none; display: flex; align-items: center; padding: 0 12px 0 5px; }
.np-title svg { width: 12px; height: 12px; margin-left: 25px; }
.np-title svg:nth-of-type(3), .np-title svg:nth-of-type(4) { margin-left: 24px; }
.np-title svg.np-ico { margin: 0 4px 0 0; }
.np-name { font-size: 9.500px; color: #9a9a9a; flex: 1; }
.np-menu { height: 15px; flex: none; display: flex; align-items: center; padding-left: 4px; gap: 7px; font-size: 9px; color: #222; }
.np-body { flex: 1; display: flex; min-height: 0; border-top: 1px solid #f0f0f0; }
.np-text { flex: 1; margin: 0; padding: 16.300px 0 0 4px; font: italic 700 13px/17.125px "DejaVu Sans Mono", monospace; letter-spacing: -.04px; color: #111; white-space: pre; overflow: hidden; }
.np-caret { display: inline-block; width: 1px; height: 15px; background: #777; vertical-align: -2px; }
.np-scroll { width: 12px; flex: none; background: #f0f0f0; position: relative; }
.np-scroll i { position: absolute; top: 73px; left: 0; right: 0; height: 313px; background: #cdcdcd; }
.np-up, .np-down { position: absolute; left: 2px; width: 8px; height: 5px; }
.np-up { top: 5px; }
.np-down { bottom: 6px; }
.pill { position: absolute; left: 349px; top: 1px; width: 282px; height: 36px; border-radius: 18px; background: rgba(222,228,238,.86); font-family: Inter, "Open Sans", sans-serif; font-size: 13.400px; font-weight: 400; line-height: 35px; text-align: center; color: #333; }
.info { position: absolute; left: 16px; top: 13px; width: 32px; height: 32px; border-radius: 50%; background: #fff; display: flex; align-items: center; justify-content: center; }
.info svg { width: 14px; height: 14px; }

/* Right panel */
.side { width: 350px; flex: none; display: flex; flex-direction: column; gap: 2px; font-family: Inter, "Open Sans", sans-serif; }
.video { height: 191px; flex: none; background: #ebebeb; border: 1px solid #a9a9a9; border-top-color: #ddd; position: relative; display: flex; flex-direction: column; align-items: center; }
.collapse { position: absolute; left: 9px; top: 3px; width: 19px; height: 19px; background: #b5b5b5; display: flex; align-items: center; justify-content: center; }
.collapse svg { width: 12px; height: 10px; }
.md { width: 87px; height: 87px; margin: 34px 0 0 0; border-radius: 50%; background: #f5f5f5; border: 1px solid #aaa; color: #2ea3dd; font-size: 36px; font-weight: 300; line-height: 84px; text-align: center; }
.vname { position: absolute; left: 0; bottom: 0; width: 190px; height: 20px; background: #fafafa; display: flex; align-items: center; justify-content: space-between; padding: 0 12px 0 10px; font-size: 12px; color: #444; }
.vname i { color: #a9d8f5; }
.chat { height: 381px; flex: none; background: #fff; display: flex; flex-direction: column; }
.chat-head { height: 35px; flex: none; display: flex; align-items: center; justify-content: space-between; padding: 3px 15px 0 10px; font-size: 14px; color: #111; }
.chat-head strong { font-weight: 600; }
.chat-head svg { width: 10px; height: 10px; }
.msgs { height: 218px; flex: none; overflow: hidden; display: flex; flex-direction: column; justify-content: flex-end; position: relative; padding: 0 13px 0 13px; font-size: 13.750px; font-weight: 300; color: #444; }
.msg-group + .msg-group { margin-top: 16px; }
.msg-group.first + .msg-group { margin-top: -3px; }
.meta { height: 21px; line-height: 21px; font-size: 11.700px; font-weight: 400; color: #aaa; white-space: nowrap; }
.row { height: 23px; line-height: 23px; display: flex; justify-content: space-between; white-space: nowrap; }
.row.wrap { height: 18px; line-height: 11px; }
.row.timeonly { height: 18px; line-height: 13px; justify-content: flex-end; }
time { font-size: 12.500px; font-weight: 400; color: #aaa; }
.msgs-thumb { position: absolute; right: 0; bottom: 0; width: 8px; height: 19px; border-radius: 4px; background: #d0d0d0; }
.sendrow { height: 37px; flex: none; display: flex; align-items: center; padding: 1px 8px 0 8px; gap: 9px; border-top: 1px solid #eee; }
.sendrow label { width: 53px; flex: none; font-size: 14px; font-weight: 300; color: #555; white-space: nowrap; }
.select { flex: 1; height: 29px; border: 1px solid #c6c6c6; border-radius: 4px; display: flex; align-items: center; justify-content: space-between; padding: 0 14px 0 10px; font-size: 11.500px; color: #555; }
.select svg { width: 12px; height: 7px; }
.compose { margin: 5px 8px 0 8px; height: 81px; border: 2px solid #17b4f5; border-radius: 2px; box-shadow: 0 0 6px #4fc6fa; padding: 5px 9px; font-size: 14px; font-weight: 300; color: #999; }

/* Meeting controls */
.controls { height: 52px; flex: none; display: flex; padding-top: 8px; padding-left: 420px; gap: 8px; background: #ececec; font-family: Inter, "Open Sans", sans-serif; }
.pillbtn { height: 44px; border-radius: 22px; background: #fff; display: flex; align-items: center; padding-bottom: 1px; font-size: 15.800px; font-weight: 300; color: #222; flex: none; }
.p-unmute { width: 132px; padding-left: 16px; }
.p-unmute > svg:first-child { width: 13px; height: 19px; margin-right: 9px; }
.p-video { width: 154px; padding-left: 14px; }
.p-video > svg:first-child { width: 17px; height: 14px; margin-right: 7px; }
.p-share { width: 103px; padding-left: 14px; }
.p-share > svg:first-child { width: 16px; height: 16px; margin-right: 8px; }
.chev { width: 9px; height: 6px; margin-left: auto; margin-right: 10px; }
.p-more { width: 44px; justify-content: center; }
.p-more svg { width: 14px; height: 2px; }
.p-end { width: 44px; justify-content: center; background: #d6391c; }
.p-end svg { width: 13px; height: 13px; }
.dock { margin-left: 191px; height: 40px; margin-top: 2px; width: 201px; background: #fff; border-radius: 20px; display: flex; flex: none; }
.dock-part { width: 122px; border-right: 1px solid #e6e6e6; display: flex; align-items: center; padding-left: 12px; font-size: 13.500px; font-weight: 300; color: #333; position: relative; }
.dock-part svg { width: 17px; height: 17px; margin-right: 7px; margin-top: 1px; }
.dot { position: absolute; left: 26px; top: 6px; width: 8px; height: 8px; border-radius: 50%; background: #d6391c; }
.dock-chat { flex: 1; display: flex; align-items: center; padding-left: 12px; gap: 7px; font-size: 13.800px; font-weight: 400; color: #2e9bc5; }
.dock-chat svg { width: 17px; height: 17px; }

/* Page scrollbar */
.pagebar { width: 16px; flex: none; background: #fff; position: relative; }
.pagebar i { position: absolute; left: 1px; right: 1px; top: 25px; height: 576px; background: #bdbdbd; }
.pb-up, .pb-down { position: absolute; left: 4px; width: 0; height: 0; border-left: 4px solid transparent; border-right: 4px solid transparent; }
.pb-up { top: 8px; border-bottom: 4px solid #444; }
.pb-down { top: 615px; border-top: 4px solid #444; }

/* Windows taskbar */
.taskbar { height: 40px; flex: none; background: #1b2a4a; display: flex; align-items: stretch; color: #fff; }
.start { width: 48px; display: flex; align-items: center; justify-content: center; }
.start svg { width: 16px; height: 16px; }
.search { width: 344px; background: #f1f1f1; border: 1px solid #bbb; display: flex; align-items: center; padding-left: 11px; gap: 12px; font-size: 14px; color: #1f2a44; }
.search svg { width: 16px; height: 16px; }
.slot { display: flex; align-items: center; justify-content: center; position: relative; flex: none; }
.s-cortana { width: 48px; }
.cortana { width: 16px; height: 16px; border-radius: 50%; border: 2.500px solid #fff; }
.s-view { width: 46px; }
.tv { width: 15px; height: 15px; }
.s-mail { width: 55px; margin-left: 3px; margin-right: -3px; }
.s-mail svg { width: 24px; height: 22px; margin-left: -6px; }
.s-store { width: 48px; } .s-store svg { width: 23px; height: 23px; margin-left: -3px; }
.s-edge { width: 48px; } .s-edge svg { width: 24px; height: 24px; }
.s-folder { width: 50px; } .s-folder svg { width: 22px; height: 20px; }
.s-chrome { width: 48px; background: #45536e; } .s-chrome svg { width: 22px; height: 22px; }
.s-office { width: 50px; } .s-office svg { width: 20px; height: 23px; }
.s-sql { width: 48px; } .s-sql svg { width: 23px; height: 23px; margin-left: -2px; }
.app.on::after { content: ""; position: absolute; left: 4px; right: 4px; bottom: 0; height: 2px; background: #76b9ed; }
.app.active::after { left: 0; right: 0; }
.tbadge { position: absolute; width: 17px; height: 17px; border-radius: 50%; background: #3c4a60; border: 1px solid #9aa2ad; color: #fff; font-size: 10px; font-weight: 400; line-height: 15px; text-align: center; }
.s-mail .tbadge { left: 30px; top: 20px; }
.tray { margin-left: auto; display: flex; align-items: center; padding-right: 5px; }
.tr-chev { width: 12px; height: 7px; margin-right: 18px; }
.tr-cloud svg { width: 16px; height: 14px; margin-top: 2px; }
.tr-power { width: 17px; height: 13px; margin-left: 16px; }
.tr-vol { width: 16px; height: 14px; margin-left: 16px; }
.lang { width: 36px; margin-left: 8px; display: flex; flex-direction: column; align-items: center; font-size: 11.500px; line-height: 18px; }
.clock { width: 72px; margin-left: 1px; display: flex; flex-direction: column; align-items: center; font-size: 11.500px; line-height: 18px; white-space: nowrap; }
.notif { width: 36px; margin-left: 3px; position: relative; height: 100%; display: flex; align-items: center; padding-left: 1px; border-right: 1px solid #5a6478; }
.notif svg { width: 17px; height: 15px; margin-top: -4px; }
.notif .tbadge { left: 8px; top: 17px; }
```
